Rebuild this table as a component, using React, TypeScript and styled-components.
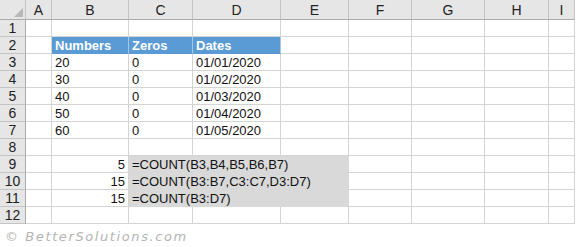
import styled, { createGlobalStyle } from 'styled-components';

const GlobalStyle = createGlobalStyle`
	html, body {
		margin: 0;
		padding: 0;
		background: #ffffff;
	}
	body {
		font-family: "Liberation Sans", Arial, sans-serif;
	}
`;

const COLS = ['A', 'B', 'C', 'D', 'E', 'F', 'G', 'H', 'I'];
const COL_WIDTHS = [26, 77, 64, 88, 68, 63, 73, 64, 26];

type CellData = {
	text?: string;
	align?: 'left' | 'right';
	fill?: 'blue' | 'gray';
	span?: number;
};

// sheet content, keyed by row then column letter
const DATA: Record<number, Record<string, CellData>> = {
	2: {
		B: { text: 'Numbers', fill: 'blue' },
		C: { text: 'Zeros', fill: 'blue' },
		D: { text: 'Dates', fill: 'blue' },
	},
	3: { B: { text: '20' }, C: { text: '0' }, D: { text: '01/01/2020' } },
	4: { B: { text: '30' }, C: { text: '0' }, D: { text: '01/02/2020' } },
	5: { B: { text: '40' }, C: { text: '0' }, D: { text: '01/03/2020' } },
	6: { B: { text: '50' }, C: { text: '0' }, D: { text: '01/04/2020' } },
	7: { B: { text: '60' }, C: { text: '0' }, D: { text: '01/05/2020' } },
	9: {
		B: { text: '5', align: 'right' },
		C: { text: '=COUNT(B3,B4,B5,B6,B7)', fill: 'gray', span: 3 },
	},
	10: {
		B: { text: '15', align: 'right' },
		C: { text: '=COUNT(B3:B7,C3:C7,D3:D7)', fill: 'gray', span: 3 },
	},
	11: {
		B: { text: '15', align: 'right' },
		C: { text: '=COUNT(B3:D7)', fill: 'gray', span: 3 },
	},
};

function Sheet() {
	const rows = Array.from({ length: 12 }, (_, i) => i + 1);

	return (
		<Grid>
			<Corner>
				<svg width="9" height="9" viewBox="0 0 9 9">
					<polygon points="9,0 9,9 0,9" fill="#b7b7b7" />
				</svg>
			</Corner>
			{COLS.map((c) => (
				<ColHeader key={c}>{c}</ColHeader>
			))}
			{rows.map((r) => {
				const rowData = DATA[r] || {};
				const cells = [];
				let skip = 0;
				for (const c of COLS) {
					if (skip > 0) {
						skip--;
						continue;
					}
					const d = rowData[c] || {};
					if (d.span) skip = d.span - 1;
					cells.push(
						<Cell
							key={c}
							$align={d.align || 'left'}
							$fill={d.fill}
							$span={d.span || 1}
						>
							{d.text}
						</Cell>
					);
				}
				return [<RowHeader key={`h${r}`}>{r}</RowHeader>, ...cells];
			})}
		</Grid>
	);
}

export default function App() {
	return (
		<>
			<GlobalStyle />
			<Page>
				<Sheet />
				<Watermark>© BetterSolutions.com</Watermark>
			</Page>
		</>
	);
}

const Page = styled.div`
	width: 576px;
	height: 247px;
	overflow: hidden;
	background: #ffffff;
`;

const Grid = styled.div`
	display: grid;
	grid-template-columns: 26px ${COL_WIDTHS.map((w) => `${w}px`).join(' ')};
	grid-template-rows: 20px repeat(12, 17px);
	width: 576px;
	font-size: 13px;
	color: #111111;
`;

const Corner = styled.div`
	background: #e6e6e6;
	border-right: 1px solid #c4c4c4;
	border-bottom: 1px solid #ababab;
	box-sizing: border-box;
	display: flex;
	justify-content: flex-end;
	align-items: flex-end;
	padding: 0 2px 2px 0;
`;

const ColHeader = styled.div`
	background: #e6e6e6;
	border-right: 1px solid #c4c4c4;
	border-bottom: 1px solid #ababab;
	box-sizing: border-box;
	display: flex;
	align-items: center;
	justify-content: center;
	font-size: 14px;
	color: #222222;
	padding-top: 1px;
`;

const RowHeader = styled.div`
	background: #e6e6e6;
	border-right: 1px solid #ababab;
	border-bottom: 1px solid #c4c4c4;
	box-sizing: border-box;
	display: flex;
	align-items: center;
	justify-content: center;
	font-size: 14px;
	color: #222222;
`;

const Cell = styled.div<{ $align: 'left' | 'right'; $fill?: 'blue' | 'gray'; $span: number }>`
	grid-column: span ${(p) => p.$span};
	box-sizing: border-box;
	display: flex;
	align-items: center;
	justify-content: ${(p) => (p.$align === 'right' ? 'flex-end' : 'flex-start')};
	padding: 1px 3px 0 3px;
	white-space: nowrap;
	overflow: visible;
	background: ${(p) =>
		p.$fill === 'blue' ? '#5b9bd5' : p.$fill === 'gray' ? '#d9d9d9' : '#ffffff'};
	border-right: 1px solid
		${(p) => (p.$fill === 'blue' ? '#a9c8e8' : p.$fill === 'gray' ? '#d9d9d9' : '#d4d4d4')};
	border-bottom: 1px solid
		${(p) => (p.$fill === 'blue' ? '#5b9bd5' : p.$fill === 'gray' ? '#d9d9d9' : '#d4d4d4')};
	color: ${(p) => (p.$fill === 'blue' ? '#ffffff' : '#111111')};
	font-weight: ${(p) => (p.$fill === 'blue' ? 700 : 400)};
`;

const Watermark = styled.div`
	padding: 5px 0 0 5px;
	font-family: "DejaVu Sans", sans-serif;
	font-style: italic;
	font-size: 13px;
	letter-spacing: 1.6px;
	color: #b4b4b4;
`;
